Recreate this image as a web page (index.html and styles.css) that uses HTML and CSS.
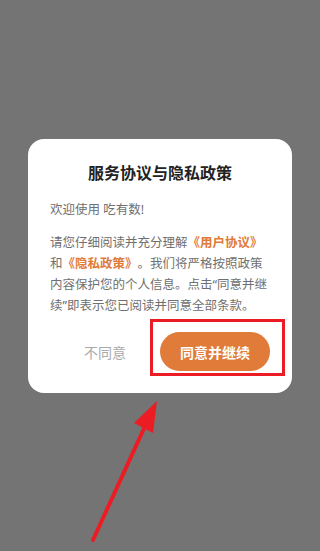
FILE: index.html
```html
<!DOCTYPE html>
<html lang="zh-CN">
<head>
<meta charset="utf-8">
<link rel="stylesheet" href="styles.css">
</head>
<body>
<div class="screen">
  <div class="dialog">
    <h1 class="title">服务协议与隐私政策</h1>
    <p class="welcome">欢迎使用 吃有数!</p>
    <p class="body">请您仔细阅读并充分理解<b class="link">《用户协议》</b>和<b class="link">《隐私政策》</b>。我们将严格按照政策内容保护您的个人信息。点击“同意并继续”即表示您已阅读并同意全部条款。</p>
    <div class="actions">
      <div class="decline">不同意</div>
      <div class="accept-wrap">
        <button class="accept">同意并继续</button>
        <div class="highlight"></div>
      </div>
    </div>
  </div>
  <svg class="arrow" width="320" height="551" viewBox="0 0 320 551">
    <line x1="93" y1="540" x2="146" y2="424" stroke="#ec1c24" stroke-width="4" stroke-linecap="round"/>
    <polygon points="157,401 134,423 153,433" fill="#ec1c24"/>
  </svg>
</div>
</body>
</html>
```

FILE: styles.css
```css
html, body {
  margin: 0;
  padding: 0;
}
body {
  background: #747474;
  font-family: "Noto Sans", "Noto Sans CJK SC", sans-serif;
}
.screen {
  position: relative;
  width: 320px;
  height: 551px;
  padding-top: 139px;
  box-sizing: border-box;
  overflow: hidden;
}
.dialog {
  position: relative;
  margin: 0 28px;
  background: #fff;
  border-radius: 16px;
  padding: 23px 22px 21px;
  height: 254px;
  box-sizing: border-box;
}
.title {
  margin: 0;
  font-size: 16px;
  line-height: 22px;
  font-weight: 700;
  color: #222;
  text-align: center;
}
.welcome {
  margin: 15px 0 0;
  font-size: 12.5px;
  line-height: 21px;
  color: #707070;
}
.body {
  margin: 12px 0 0;
  font-size: 12.5px;
  line-height: 21px;
  color: #707070;
  text-spacing-trim: space-all;
}
.link {
  color: #e07b39;
  font-weight: 700;
}
.actions {
  display: flex;
  align-items: center;
  margin-top: 16px;
}
.decline {
  flex: 1;
  text-align: center;
  font-size: 14px;
  color: #aaa;
}
.accept-wrap {
  position: relative;
  width: 110px;
}
.accept {
  display: block;
  width: 110px;
  height: 39px;
  border: none;
  border-radius: 20px;
  background: #e07b39;
  color: #fff;
  font-family: inherit;
  font-size: 14px;
  font-weight: 700;
  padding: 0;
}
.highlight {
  position: absolute;
  left: -10px;
  top: -13px;
  right: -15px;
  bottom: -5px;
  border: 3px solid #ec1c24;
}
.arrow {
  position: absolute;
  left: 0;
  top: 0;
}
```
